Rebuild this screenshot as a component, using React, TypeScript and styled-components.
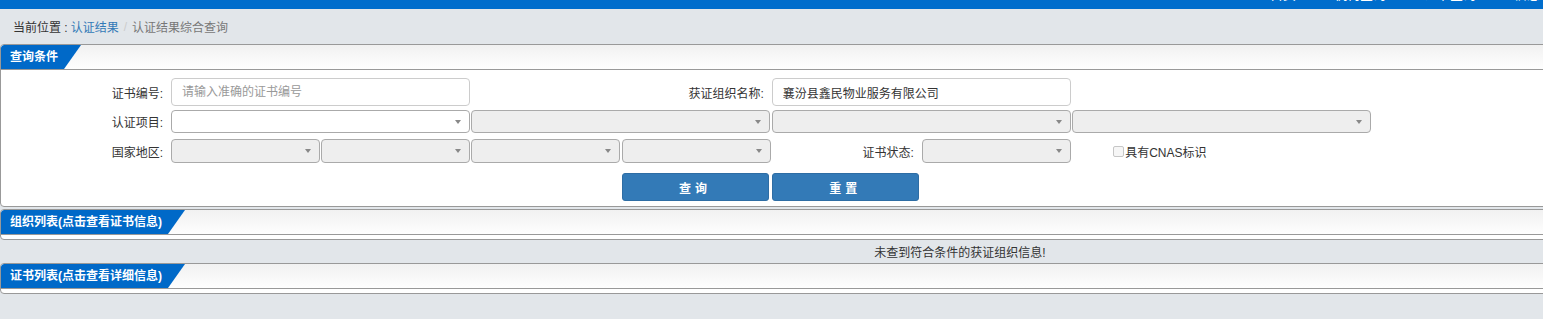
import * as React from "react";
import styled, { createGlobalStyle } from "styled-components";

const GlobalStyle = createGlobalStyle`
  html, body {
    margin: 0;
    padding: 0;
    background: #e2e6ea;
    overflow: hidden;
  }
  body {
    font-family: "Liberation Sans", "Noto Sans CJK SC", sans-serif;
    font-size: 12px;
    color: #333;
  }
`;

const Page = styled.div`
  width: 1920px;
  min-height: 319px;
  background: #e2e6ea;
`;

const TopBar = styled.div`
  height: 9px;
  background: #006dcc;
  overflow: hidden;
  display: flex;
  align-items: flex-start;
`;

const TopNav = styled.ul`
  display: flex;
  gap: 38px;
  margin: -12px 0 0 1270px;
  padding: 0;
  list-style: none;
`;

const TopNavItem = styled.li`
  color: #fff;
  font-size: 13px;
  line-height: 13px;
`;

const Crumbs = styled.div`
  height: 35px;
  display: flex;
  align-items: center;
  padding-left: 13px;
  gap: 3px;
`;

const CrumbLabel = styled.span`
  color: #333;
`;

const CrumbLink = styled.a`
  color: #337ab7;
  text-decoration: none;
`;

const CrumbSep = styled.span`
  color: #ccc;
  padding: 0 2px;
`;

const CrumbCurrent = styled.span`
  color: #777;
`;

const Panel = styled.section`
  border: 1px solid #999;
  border-radius: 4px;
  background: #fff;
  overflow: hidden;
  & + & {
    margin-top: 2px;
  }
`;

const PanelHead = styled.div`
  height: 24px;
  border-bottom: 1px solid #999;
  background: linear-gradient(to bottom, #f1f1f1, #fefefe);
  display: flex;
`;

const Tab = styled.h3`
  margin: 0;
  height: 24px;
  line-height: 24px;
  padding: 0 23px 0 9px;
  background: #0069c8;
  color: #fff;
  font-size: 12px;
  font-weight: bold;
  border-top-left-radius: 3px;
  clip-path: polygon(0 0, 100% 0, calc(100% - 17px) 100%, 0 100%);
`;

const PanelBody = styled.div<{ $pad?: string }>`
  padding: ${(p) => p.$pad || "0"};
  min-height: 4px;
`;

const FormRow = styled.div<{ $h: number; $mt?: number }>`
  display: grid;
  grid-template-columns: 170px repeat(8, 150.2px);
  height: ${(p) => p.$h}px;
  margin-top: ${(p) => p.$mt || 0}px;
  align-items: stretch;
`;

const Label = styled.label<{ $span?: number }>`
  grid-column: span ${(p) => p.$span || 1};
  display: flex;
  align-items: center;
  justify-content: flex-end;
  padding-right: 8px;
  color: #333;
  white-space: nowrap;
`;

const TextInput = styled.input`
  grid-column: span 2;
  width: 299px;
  box-sizing: border-box;
  border: 1px solid #ccc;
  border-radius: 4px;
  padding: 0 10px;
  font-family: inherit;
  font-size: 12px;
  color: #333;
  outline: none;
  &::placeholder {
    color: #999;
  }
`;

const Select = styled.div<{ $span?: number; $disabled?: boolean }>`
  grid-column: span ${(p) => p.$span || 1};
  width: ${(p) => (p.$span || 1) * 150 - 1}px;
  box-sizing: border-box;
  border: 1px solid #aaa;
  border-radius: 4px;
  background: ${(p) => (p.$disabled ? "#eee" : "#fff")};
  position: relative;
  &::after {
    content: "";
    position: absolute;
    right: 8px;
    top: 50%;
    margin-top: -2px;
    border-left: 3px solid transparent;
    border-right: 3px solid transparent;
    border-top: 4px solid #888;
  }
`;

const CheckCell = styled.label`
  grid-column: span 2;
  display: flex;
  align-items: center;
  padding-left: 41px;
  color: #333;
`;

const CheckBox = styled.span`
  width: 9px;
  height: 9px;
  border: 1px solid #c6c6c6;
  border-radius: 2px;
  background: #f6f6f6;
  margin-right: 1px;
`;

const Button = styled.button`
  width: 147px;
  border: 1px solid #2e6da4;
  border-radius: 3px;
  background: #337ab7;
  color: #fff;
  font-family: inherit;
  font-size: 12px;
  font-weight: bold;
  letter-spacing: 4px;
  padding: 0;
  cursor: pointer;
`;

const Spacer = styled.div<{ $span: number }>`
  grid-column: span ${(p) => p.$span};
`;

const Message = styled.div`
  height: 23px;
  display: flex;
  align-items: center;
  justify-content: center;
  color: #333;
`;

export default function App() {
  return (
    <Page>
      <GlobalStyle />
      <TopBar>
        <TopNav>
          <TopNavItem>首页</TopNavItem>
          <TopNavItem>机构查询</TopNavItem>
          <TopNavItem>证书查询</TopNavItem>
          <TopNavItem>信息公开</TopNavItem>
        </TopNav>
      </TopBar>
      <Crumbs>
        <CrumbLabel>当前位置 :</CrumbLabel>
        <CrumbLink href="#">认证结果</CrumbLink>
        <CrumbSep>/</CrumbSep>
        <CrumbCurrent>认证结果综合查询</CrumbCurrent>
      </Crumbs>

      <Panel>
        <PanelHead>
          <Tab>查询条件</Tab>
        </PanelHead>
        <PanelBody $pad="8px 0 5px">
          <FormRow $h={28}>
            <Label>证书编号:</Label>
            <TextInput placeholder="请输入准确的证书编号" />
            <Label $span={2}>获证组织名称:</Label>
            <TextInput defaultValue="襄汾县鑫民物业服务有限公司" />
          </FormRow>
          <FormRow $h={23} $mt={4}>
            <Label>认证项目:</Label>
            <Select $span={2} />
            <Select $span={2} $disabled />
            <Select $span={2} $disabled />
            <Select $span={2} $disabled />
          </FormRow>
          <FormRow $h={24} $mt={6}>
            <Label>国家地区:</Label>
            <Select $disabled />
            <Select $disabled />
            <Select $disabled />
            <Select $disabled />
            <Label>证书状态:</Label>
            <Select $disabled />
            <CheckCell>
              <CheckBox />
              具有CNAS标识
            </CheckCell>
          </FormRow>
          <FormRow $h={28} $mt={10}>
            <Spacer $span={4} />
            <Button>查询</Button>
            <Button>重置</Button>
          </FormRow>
        </PanelBody>
      </Panel>

      <Panel>
        <PanelHead>
          <Tab>组织列表(点击查看证书信息)</Tab>
        </PanelHead>
        <PanelBody />
      </Panel>
      <Message>未查到符合条件的获证组织信息!</Message>
      <Panel>
        <PanelHead>
          <Tab>证书列表(点击查看详细信息)</Tab>
        </PanelHead>
        <PanelBody />
      </Panel>
    </Page>
  );
}
